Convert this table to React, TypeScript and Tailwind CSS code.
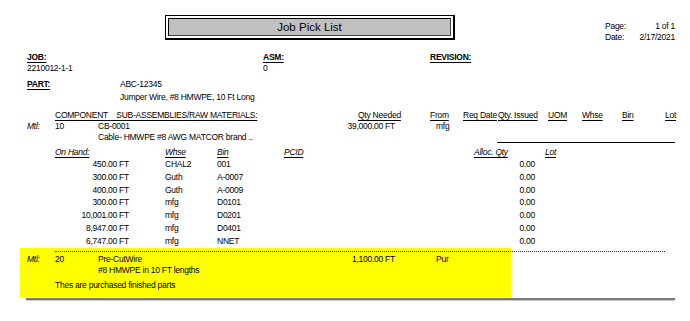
import React from "react";

type StockRow = { qty: string; whse: string; bin: string; alloc: string };

const onHand: StockRow[] = [
  { qty: "450.00 FT", whse: "CHAL2", bin: "001", alloc: "0.00" },
  { qty: "300.00 FT", whse: "Guth", bin: "A-0007", alloc: "0.00" },
  { qty: "400.00 FT", whse: "Guth", bin: "A-0009", alloc: "0.00" },
  { qty: "300.00 FT", whse: "mfg", bin: "D0101", alloc: "0.00" },
  { qty: "10,001.00 FT", whse: "mfg", bin: "D0201", alloc: "0.00" },
  { qty: "8,947.00 FT", whse: "mfg", bin: "D0401", alloc: "0.00" },
  { qty: "6,747.00 FT", whse: "mfg", bin: "NNET", alloc: "0.00" },
];

const Label = ({ children, className = "" }: { children: React.ReactNode; className?: string }) => (
  <span className={`font-bold underline underline-offset-2 ${className}`}>{children}</span>
);

export default function App() {
  return (
    <div className="w-[690px] h-[321px] overflow-hidden bg-white text-black font-['Liberation_Sans',Arial,sans-serif] text-[8.5px] leading-[11px] tracking-[-0.25px]">
      {/* Title box + page info */}
      <div className="flex items-start pt-[15px]">
        <div className="ml-[165px] w-[290px] h-[25px] shrink-0 border border-black border-r-2 border-b-2 p-[2px]">
          <div className="h-full border border-black border-r-[#444] border-b-[#444] bg-[#c0c0c0] flex items-center justify-center text-[11.5px] tracking-normal">
            Job Pick List
          </div>
        </div>
        <div className="ml-[150px] mt-[6px] w-[70px] shrink-0">
          <div className="flex justify-between h-[11px]">
            <span>Page:</span>
            <span>1 of 1</span>
          </div>
          <div className="flex justify-between h-[11px]">
            <span>Date:</span>
            <span>2/17/2021</span>
          </div>
        </div>
      </div>

      {/* Job / Asm / Revision */}
      <div className="flex mt-[9px] h-[11px] pl-[27px]">
        <div className="w-[236px] shrink-0">
          <Label>JOB:</Label>
        </div>
        <div className="w-[167px] shrink-0">
          <Label>ASM:</Label>
        </div>
        <Label>REVISION:</Label>
      </div>
      <div className="flex h-[11px] pl-[27px]">
        <div className="w-[236px] shrink-0">2210012-1-1</div>
        <div>0</div>
      </div>

      {/* Part */}
      <div className="flex mt-[5px] h-[11px] pl-[27px]">
        <div className="w-[93px] shrink-0">
          <Label>PART:</Label>
        </div>
        <div>ABC-12345</div>
      </div>
      <div className="mt-[2px] h-[11px] pl-[120px]">Jumper Wire, #8 HMWPE, 10 Ft Long</div>

      {/* Component header */}
      <div className="flex mt-[7px] h-[11px] whitespace-nowrap [&>div]:shrink-0">
        <div className="ml-[55px] w-[303px]">
          <span className="underline underline-offset-2 whitespace-pre">COMPONENT    SUB-ASSEMBLIES/RAW MATERIALS:</span>
        </div>
        <div className="w-[72px]"><span className="underline underline-offset-2">Qty Needed</span></div>
        <div className="w-[33px]"><span className="underline underline-offset-2">From</span></div>
        <div className="w-[35px]"><span className="underline underline-offset-2">Req Date</span></div>
        <div className="w-[50px]"><span className="underline underline-offset-2">Qty. Issued</span></div>
        <div className="w-[34px]"><span className="underline underline-offset-2">UOM</span></div>
        <div className="w-[40px]"><span className="underline underline-offset-2">Whse</span></div>
        <div className="w-[43px]"><span className="underline underline-offset-2">Bin</span></div>
        <div><span className="underline underline-offset-2">Lot</span></div>
      </div>

      {/* Material 10 */}
      <div className="flex h-[11px] whitespace-nowrap [&>div]:shrink-0">
        <div className="ml-[27px] w-[28px] italic">Mtl:</div>
        <div className="w-[43px]">10</div>
        <div className="w-[247px]">CB-0001</div>
        <div className="w-[50px] text-right">39,000.00 FT</div>
        <div className="ml-[41px]">mfg</div>
      </div>
      <div className="flex h-[11px] whitespace-nowrap [&>div]:shrink-0">
        <div className="ml-[98px] w-[399px]">Cable- HMWPE #8 AWG MATCOR brand ..</div>
        <div className="w-[178px] h-full border-b border-black" />
      </div>

      {/* On hand header */}
      <div className="flex mt-[4px] h-[11px] italic whitespace-nowrap [&>div]:shrink-0">
        <div className="ml-[55px] w-[110px]"><span className="underline underline-offset-2">On Hand:</span></div>
        <div className="w-[52px]"><span className="underline underline-offset-2">Whse</span></div>
        <div className="w-[67px]"><span className="underline underline-offset-2">Bin</span></div>
        <div className="w-[190px]"><span className="underline underline-offset-2">PCID</span></div>
        <div className="w-[71px]"><span className="underline underline-offset-2">Alloc. Qty</span></div>
        <div><span className="underline underline-offset-2">Lot</span></div>
      </div>

      {/* On hand rows */}
      {onHand.map((row, i) => (
        <div key={i} className="flex h-[12.8px] leading-[12.8px] whitespace-nowrap [&>div]:shrink-0">
          <div className="w-[129px] text-right">{row.qty}</div>
          <div className="ml-[36px] w-[52px]">{row.whse}</div>
          <div className="w-[268px]">{row.bin}</div>
          <div className="w-[50px] text-right">{row.alloc}</div>
        </div>
      ))}

      {/* Highlighted material 20 */}
      <div className="ml-[20px] w-[491px] h-[49px] bg-[#ffff00] pt-[3px] whitespace-nowrap">
        <div className="ml-[35px] w-[610px] h-0 border-t border-dotted border-[#333]" />
        <div className="flex mt-[2px] h-[11px] [&>div]:shrink-0">
          <div className="ml-[7px] w-[28px] italic">Mtl:</div>
          <div className="w-[43px]">20</div>
          <div className="w-[247px]">Pre-CutWire</div>
          <div className="w-[50px] text-right">1,100.00 FT</div>
          <div className="ml-[41px]">Pur</div>
        </div>
        <div className="ml-[78px] h-[11px]">#8 HMWPE in 10 FT lengths</div>
        <div className="ml-[35px] mt-[4px] h-[11px]">Thes are purchased finished parts</div>
      </div>

      {/* Bottom rule */}
      <div className="ml-[26px] mt-[1px] w-[649px] h-[3px] border-t-2 border-[#7a7a7a] border-b border-b-[#c8c8c8]" />
    </div>
  );
}
